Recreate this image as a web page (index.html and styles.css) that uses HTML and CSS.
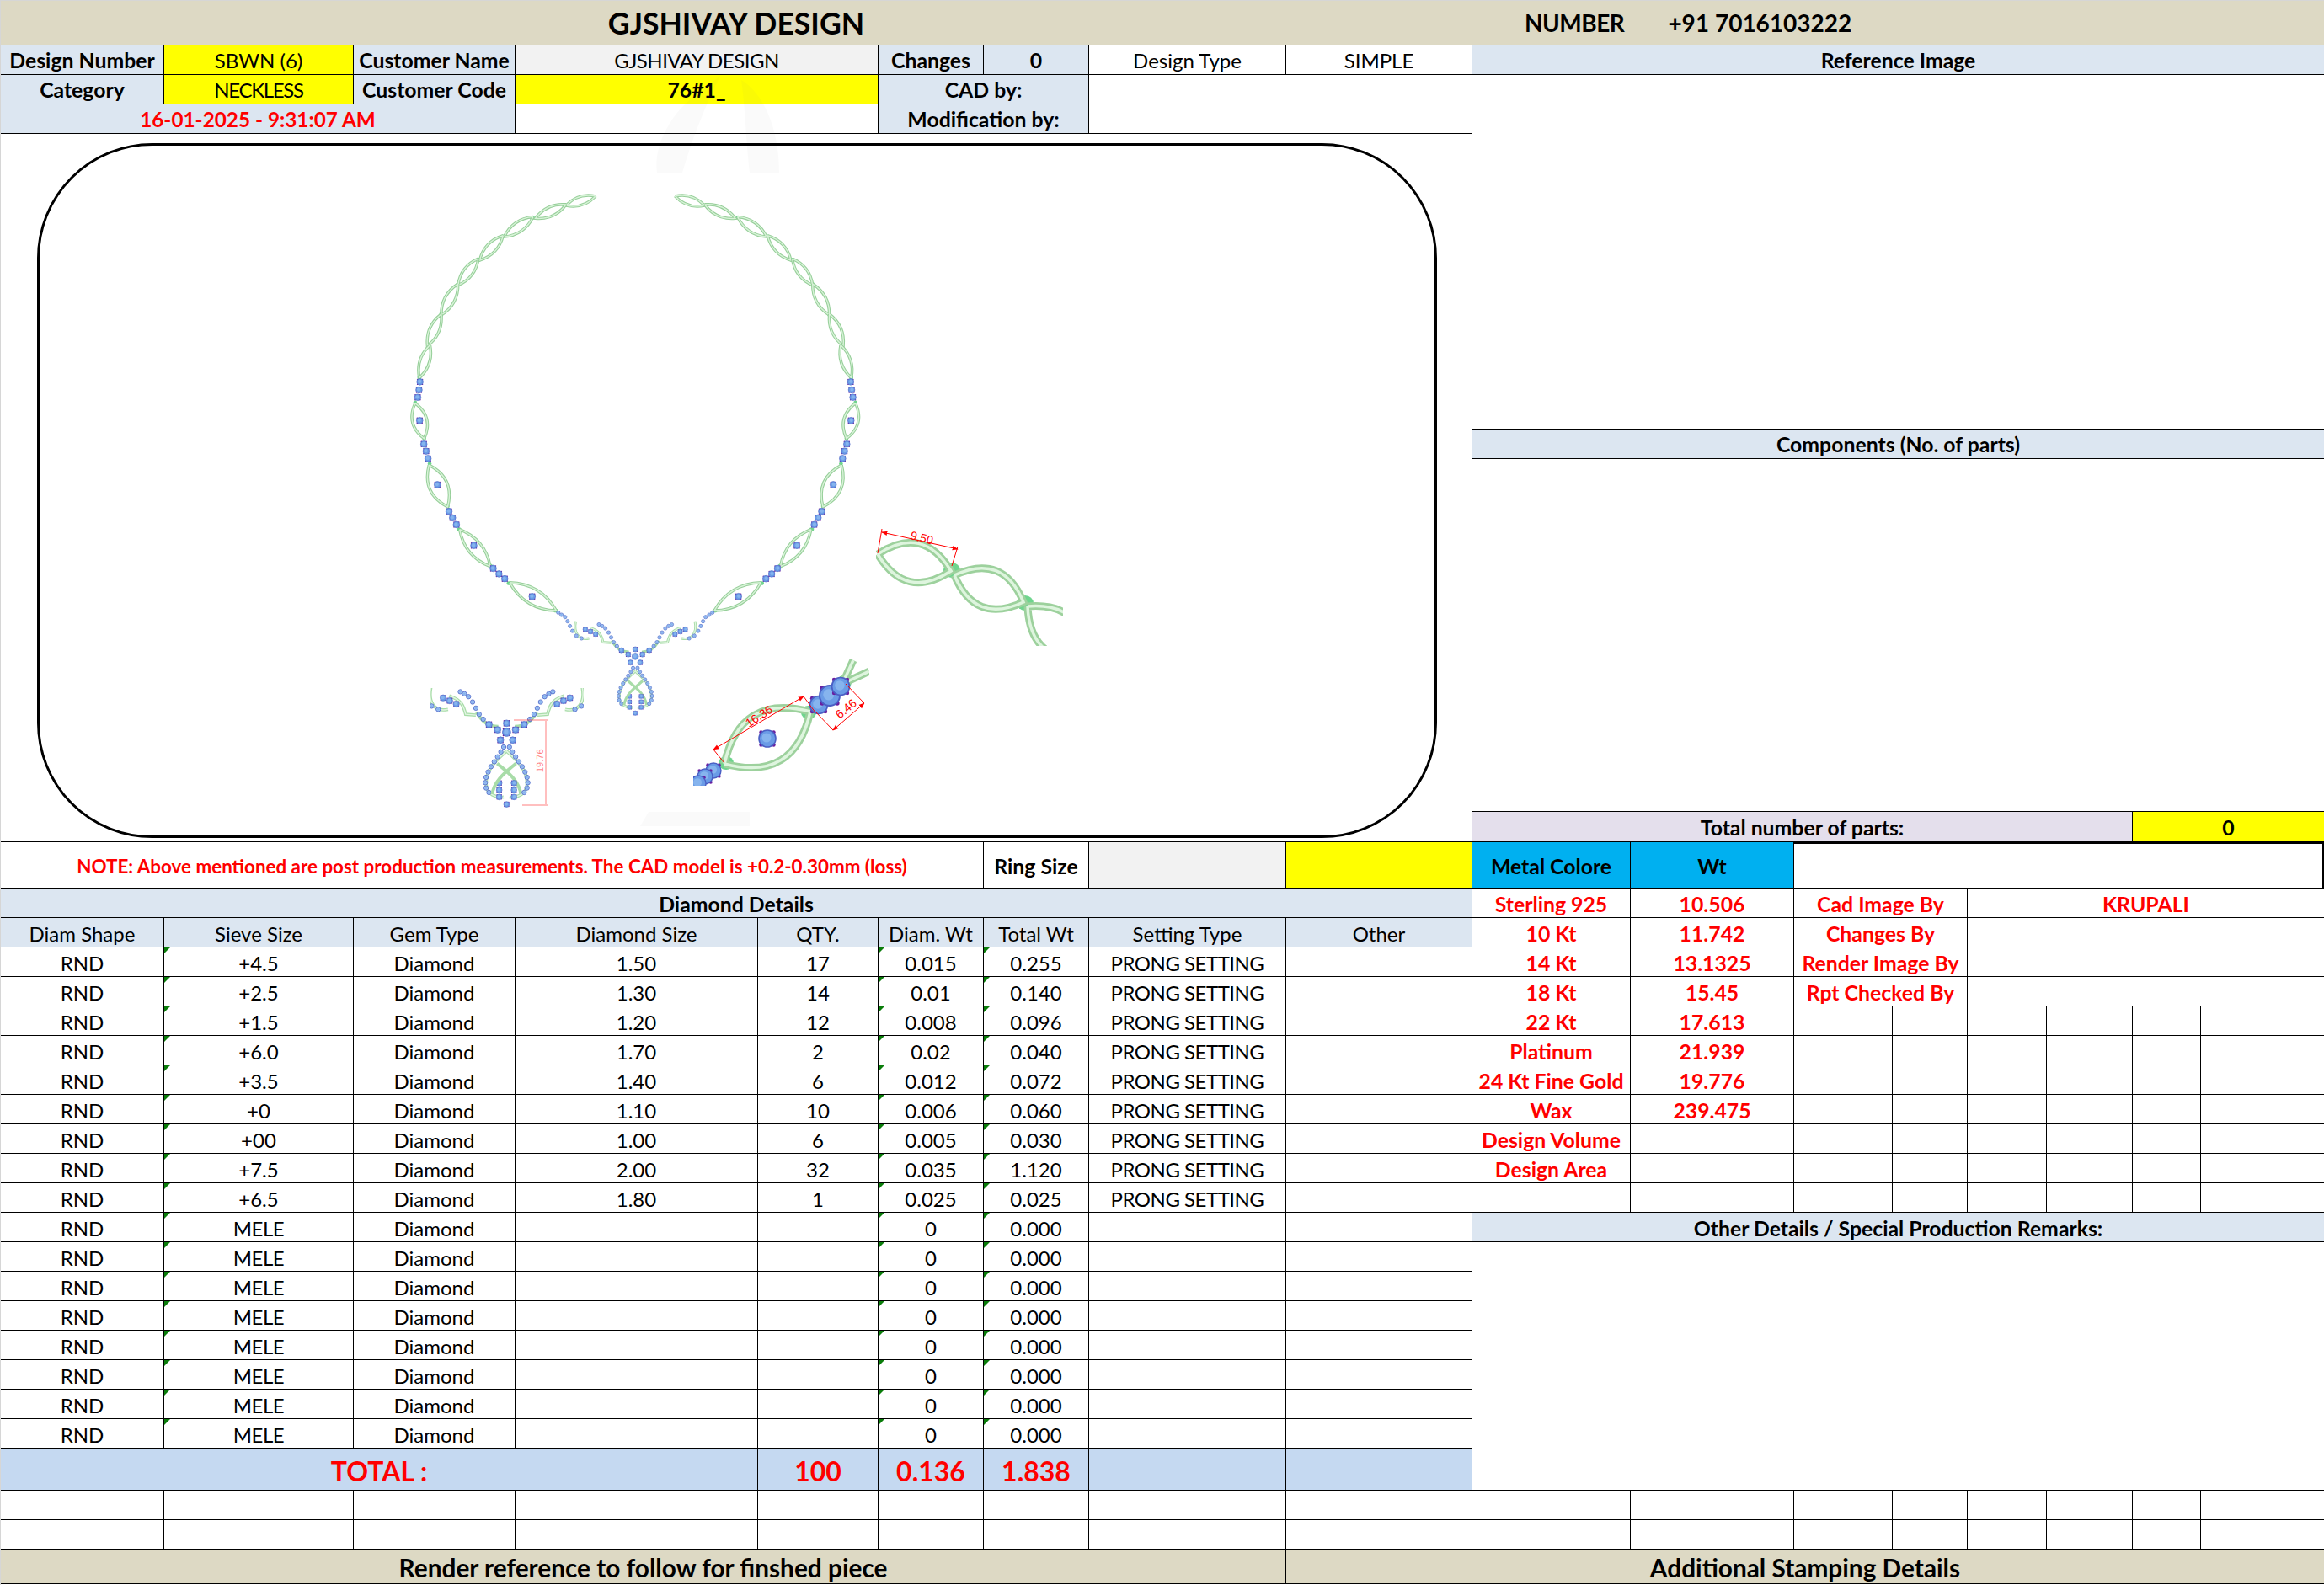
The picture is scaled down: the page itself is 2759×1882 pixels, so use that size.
FILE: index.html
```html
<!DOCTYPE html>
<html lang="en">
<head>
<meta charset="utf-8">
<title>GJSHIVAY DESIGN</title>
<link rel="stylesheet" href="styles.css">
</head>
<body>
<main class="sheet">
  <div class="upper">
    <section class="left">
      <div class="c tan title s9">GJSHIVAY DESIGN</div>

      <div class="c blue b">Design Number</div><div class="c yel">SBWN (6)</div><div class="c blue b">Customer Name</div><div class="c gray s2 caps">GJSHIVAY DESIGN</div><div class="c blue b">Changes</div><div class="c blue b">0</div><div class="c">Design Type</div><div class="c">SIMPLE</div>
      <div class="c blue b">Category</div><div class="c yel caps-tight">NECKLESS</div><div class="c blue b">Customer Code</div><div class="c yel b s2">76#1_</div><div class="c blue b s2">CAD by:</div><div class="c s2"></div>
      <div class="c blue red b s3 date">16-01-2025 - 9:31:07 AM</div><div class="c s2"></div><div class="c blue b s2">Modification by:</div><div class="c s2"></div>

      <div class="c s9 drawing">
        <svg class="art" viewBox="1 159 1747 841" aria-hidden="true">
          <defs>
            <g id="leaf"><path class="tube" d="M0 0Q.5 .28 1 0Q.5 -.28 0 0"/><path class="tube-hi" d="M0 0Q.5 .28 1 0Q.5 -.28 0 0"/></g>
            <g id="leaf-wide"><path class="tube" d="M0 0Q.5 .4 1 0Q.5 -.4 0 0"/><path class="tube-hi" d="M0 0Q.5 .4 1 0Q.5 -.4 0 0"/></g>
            <g id="fat-leaf"><path class="fat" d="M0 0Q.5 .52 1 0Q.5 -.52 0 0"/><path class="fat-hi" d="M0 0Q.5 .52 1 0Q.5 -.52 0 0"/></g>
            <g id="stone">
              <circle class="prong" cx="-7.500" cy="-7.500" r="2.200"/><circle class="prong" cx="7.500" cy="-7.500" r="2.200"/><circle class="prong" cx="-7.500" cy="7.500" r="2.200"/><circle class="prong" cx="7.500" cy="7.500" r="2.200"/>
              <circle class="gem" r="10"/><circle class="gem-hi" cx="-1" cy="-1" r="5.500"/>
            </g>
            <g id="bead"><circle class="gem thin" r="5.500"/><circle class="gem-hi" r="2.600"/></g>
            <marker id="arrow" viewBox="0 0 10 10" refX="9" refY="5" markerWidth="7" markerHeight="7" orient="auto-start-reverse"><path class="dim-head" d="M0 1L10 5L0 9Z"/></marker>
            <clipPath id="clip-chain"><rect x="1040" y="630" width="222" height="137"/></clipPath>
            <clipPath id="clip-link"><rect x="823" y="782" width="209" height="151"/></clipPath>
            <clipPath id="clip-drop"><rect x="510" y="817" width="183" height="142"/></clipPath>

            <g id="half">
              <ellipse class="blob" cx="572" cy="112" rx="8" ry="5"/><ellipse class="blob" cx="475" cy="152" rx="8" ry="5"/><ellipse class="blob" cx="386" cy="210" rx="8" ry="5"/><ellipse class="blob" cx="310" cy="283" rx="7" ry="6"/><ellipse class="blob" cx="245" cy="360" rx="6" ry="7"/><ellipse class="blob" cx="193" cy="453" rx="6" ry="8"/><ellipse class="blob" cx="153" cy="548" rx="6" ry="8"/><ellipse class="blob" cx="125" cy="648" rx="6" ry="8"/><ellipse class="blob" cx="112" cy="726" rx="6" ry="6"/><ellipse class="blob" cx="140" cy="838" rx="6" ry="6"/><ellipse class="blob" cx="157" cy="916" rx="6" ry="6"/><ellipse class="blob" cx="213" cy="1048" rx="6" ry="6"/><ellipse class="blob" cx="248" cy="1120" rx="7" ry="6"/><ellipse class="blob" cx="345" cy="1233" rx="7" ry="6"/><ellipse class="blob" cx="403" cy="1287" rx="7" ry="6"/><ellipse class="blob" cx="548" cy="1372" rx="7" ry="6"/>
              <use href="#leaf" transform="matrix(-92 29 -29 -92 672 86)"/>
              <use href="#leaf" transform="matrix(-95 43 -43 -95 580 112)"/>
              <use href="#leaf" transform="matrix(-90 62 -62 -90 478 150)"/>
              <use href="#leaf" transform="matrix(-73 77 -77 -73 385 208)"/>
              <use href="#leaf" transform="matrix(-63 82 -82 -63 308 280)"/>
              <use href="#leaf" transform="matrix(-52 97 -97 -52 245 358)"/>
              <use href="#leaf" transform="matrix(-43 98 -98 -43 193 452)"/>
              <use href="#leaf" transform="matrix(-33 102 -102 -33 158 548)"/>
              <use href="#leaf-wide" transform="matrix(28 110 -110 28 112 728)"/>
              <use href="#leaf-wide" transform="matrix(58 130 -130 58 155 920)"/>
              <use href="#leaf" transform="matrix(95 115 -115 95 250 1120)"/>
              <use href="#leaf" transform="matrix(145 87 -87 145 405 1285)"/>
              <use href="#stone" x="127" y="662"/><use href="#stone" x="124" y="687"/><use href="#stone" x="120" y="710"/>
              <use href="#stone" x="126" y="782"/>
              <use href="#stone" x="139" y="855"/><use href="#stone" x="146" y="877"/><use href="#stone" x="152" y="900"/>
              <use href="#stone" x="181" y="981"/>
              <use href="#stone" x="217" y="1064"/><use href="#stone" x="228" y="1084"/><use href="#stone" x="240" y="1105"/>
              <use href="#stone" x="294" y="1170"/>
              <use href="#stone" x="354" y="1241"/><use href="#stone" x="372" y="1258"/><use href="#stone" x="390" y="1273"/>
              <use href="#stone" x="475" y="1328"/>
            </g>

            <g id="center-half">
              <path class="ribbon" d="M610 1405C603 1440 618 1465 652 1458"/>
              <path class="ribbon" d="M655 1425C685 1435 690 1450 695 1470L720 1472"/>
              <path class="ribbon" d="M722 1465C735 1490 752 1500 775 1500"/>
              <path class="ribbon-hi" d="M610 1405C603 1440 618 1465 652 1458"/>
              <path class="ribbon-hi" d="M655 1425C685 1435 690 1450 695 1470L720 1472"/>
              <use href="#bead" x="556" y="1378"/><use href="#bead" x="566" y="1385"/><use href="#bead" x="577" y="1392"/><use href="#bead" x="585" y="1405"/><use href="#bead" x="592" y="1420"/><use href="#bead" x="600" y="1435"/><use href="#bead" x="612" y="1450"/><use href="#bead" x="628" y="1458"/>
              <use href="#stone" transform="translate(640 1430) scale(.75)"/><use href="#stone" transform="translate(656 1437) scale(.75)"/><use href="#stone" transform="translate(672 1445) scale(.75)"/>
              <use href="#bead" x="682" y="1415"/><use href="#bead" x="692" y="1420"/><use href="#bead" x="702" y="1427"/><use href="#bead" x="712" y="1440"/><use href="#bead" x="720" y="1455"/><use href="#bead" x="728" y="1470"/><use href="#bead" x="738" y="1482"/>
              <use href="#stone" transform="translate(752 1495) scale(.8)"/>
              <path class="ribbon" d="M795 1560C760 1590 745 1610 745 1640C745 1665 770 1675 788 1672"/>
              <path class="ribbon" d="M772 1590C795 1610 825 1630 830 1665"/>
              <path class="ribbon-hi" d="M795 1560C760 1590 745 1610 745 1640C745 1665 770 1675 788 1672"/>
              <use href="#bead" x="788" y="1550"/><use href="#bead" x="781" y="1562"/><use href="#bead" x="773" y="1574"/><use href="#bead" x="765" y="1586"/><use href="#bead" x="757" y="1598"/><use href="#bead" x="750" y="1611"/><use href="#bead" x="745" y="1624"/><use href="#bead" x="743" y="1637"/><use href="#bead" x="745" y="1650"/><use href="#bead" x="752" y="1661"/>
              <use href="#stone" transform="translate(777 1638) scale(.7)"/><use href="#stone" transform="translate(777 1655) scale(.7)"/><use href="#stone" transform="translate(777 1672) scale(.7)"/>
            </g>

            <g id="center">
              <use href="#center-half"/>
              <use href="#center-half" transform="translate(1590 0) scale(-1 1)"/>
              <use href="#stone" transform="translate(795 1690) scale(.7)"/>
              <use href="#stone" transform="translate(795 1492) scale(.8)"/>
              <use href="#stone" transform="translate(773 1508) scale(.8)"/>
              <use href="#stone" transform="translate(817 1508) scale(.8)"/>
              <use href="#stone" transform="translate(780 1533) scale(.8)"/>
              <use href="#stone" transform="translate(810 1533) scale(.8)"/>
              <use href="#stone" transform="translate(795 1514)"/>
            </g>
          </defs>

          <g class="ghost">
            <path d="M855 90C835 130 820 170 810 205L780 205C775 170 800 130 830 110Z"/>
            <path d="M880 95C905 110 925 150 925 205L890 205C885 160 885 130 880 95Z"/>
            <path d="M770 964H890V981H760Z"/>
          </g>

          <rect class="frame" x="45.500" y="171.500" width="1659" height="822" rx="135" ry="135"/>

          <g transform="translate(450 200) scale(.3827)">
            <use href="#half"/>
            <use href="#half" transform="translate(1590 0) scale(-1 1)"/>
            <use href="#center"/>
          </g>

          <g clip-path="url(#clip-drop)">
            <use href="#center" transform="translate(601.400 870) scale(.486) translate(-795 -1515)"/>
          </g>
          <path class="dim faint" d="M610 855H650M620 956H650"/>
          <path class="dim faint" d="M648 856V955"/>
          <text class="dim-text faint" transform="translate(645 917) rotate(-90)">19.76</text>

          <g clip-path="url(#clip-chain)">
            <ellipse class="blob" cx="1130" cy="677" rx="10" ry="9"/><ellipse class="blob" cx="1217" cy="716" rx="10" ry="9"/>
            <use href="#fat-leaf" transform="matrix(87 20 -20 87 1042 658)"/>
            <use href="#fat-leaf" transform="matrix(82 32 -32 82 1133 683)"/>
            <use href="#fat-leaf" transform="matrix(70 62 -62 70 1220 720)"/>
          </g>
          <path class="dim" d="M1047 628L1042 657M1137 649L1130 672"/>
          <path class="dim" d="M1047 632L1137 652" marker-start="url(#arrow)" marker-end="url(#arrow)"/>
          <text class="dim-text" transform="translate(1080 640) rotate(14)">9.50</text>

          <g clip-path="url(#clip-link)">
            <ellipse class="blob" cx="960" cy="846" rx="9" ry="8"/><ellipse class="blob" cx="862" cy="906" rx="9" ry="8"/><ellipse class="blob" cx="1002" cy="810" rx="9" ry="8"/>
            <path class="fat" d="M1000 812L1013 784M1000 812L1032 797"/>
            <path class="fat-hi" d="M1000 812L1013 784M1000 812L1032 797"/>
            <use href="#fat-leaf" transform="matrix(102 -62 62 102 860 907)"/>
            <use href="#stone" transform="translate(911 877) scale(1)"/>
            <use href="#stone" transform="translate(972 837) scale(1.05)"/>
            <use href="#stone" transform="translate(985 826) scale(1.2)"/>
            <use href="#stone" transform="translate(998 815) scale(1.05)"/>
            <use href="#stone" transform="translate(847 915) scale(.9)"/>
            <use href="#stone" transform="translate(837 922) scale(.9)"/>
            <use href="#stone" transform="translate(829 930) scale(.9)"/>
          </g>
          <path class="dim" d="M847 890L860 906M954 827L968 846"/>
          <path class="dim" d="M847 890L954 827" marker-start="url(#arrow)" marker-end="url(#arrow)"/>
          <text class="dim-text" transform="translate(889 864) rotate(-33)">16.36</text>
          <path class="dim" d="M989 867L968 845M1026 835L1004 812"/>
          <path class="dim" d="M989 867L1026 835" marker-start="url(#arrow)" marker-end="url(#arrow)"/>
          <text class="dim-text" transform="translate(997 854) rotate(-40)">6.46</text>
        </svg>
      </div>

      <div class="c red b s6 note">NOTE: Above mentioned are post production measurements. The CAD model is +0.2-0.30mm (loss)</div><div class="c b">Ring Size</div><div class="c gray"></div><div class="c yel"></div>

      <div class="c blue b s9">Diamond Details</div>
      <div class="c blue">Diam Shape</div><div class="c blue">Sieve Size</div><div class="c blue">Gem Type</div><div class="c blue">Diamond Size</div><div class="c blue">QTY.</div><div class="c blue">Diam. Wt</div><div class="c blue">Total Wt</div><div class="c blue">Setting Type</div><div class="c blue">Other</div>

      <div class="c">RND</div><div class="c flag">+4.5</div><div class="c">Diamond</div><div class="c">1.50</div><div class="c">17</div><div class="c flag">0.015</div><div class="c flag">0.255</div><div class="c caps">PRONG SETTING</div><div class="c"></div>
      <div class="c">RND</div><div class="c flag">+2.5</div><div class="c">Diamond</div><div class="c">1.30</div><div class="c">14</div><div class="c flag">0.01</div><div class="c flag">0.140</div><div class="c caps">PRONG SETTING</div><div class="c"></div>
      <div class="c">RND</div><div class="c flag">+1.5</div><div class="c">Diamond</div><div class="c">1.20</div><div class="c">12</div><div class="c flag">0.008</div><div class="c flag">0.096</div><div class="c caps">PRONG SETTING</div><div class="c"></div>
      <div class="c">RND</div><div class="c flag">+6.0</div><div class="c">Diamond</div><div class="c">1.70</div><div class="c">2</div><div class="c flag">0.02</div><div class="c flag">0.040</div><div class="c caps">PRONG SETTING</div><div class="c"></div>
      <div class="c">RND</div><div class="c flag">+3.5</div><div class="c">Diamond</div><div class="c">1.40</div><div class="c">6</div><div class="c flag">0.012</div><div class="c flag">0.072</div><div class="c caps">PRONG SETTING</div><div class="c"></div>
      <div class="c">RND</div><div class="c flag">+0</div><div class="c">Diamond</div><div class="c">1.10</div><div class="c">10</div><div class="c flag">0.006</div><div class="c flag">0.060</div><div class="c caps">PRONG SETTING</div><div class="c"></div>
      <div class="c">RND</div><div class="c flag">+00</div><div class="c">Diamond</div><div class="c">1.00</div><div class="c">6</div><div class="c flag">0.005</div><div class="c flag">0.030</div><div class="c caps">PRONG SETTING</div><div class="c"></div>
      <div class="c">RND</div><div class="c flag">+7.5</div><div class="c">Diamond</div><div class="c">2.00</div><div class="c">32</div><div class="c flag">0.035</div><div class="c flag">1.120</div><div class="c caps">PRONG SETTING</div><div class="c"></div>
      <div class="c">RND</div><div class="c flag">+6.5</div><div class="c">Diamond</div><div class="c">1.80</div><div class="c">1</div><div class="c flag">0.025</div><div class="c flag">0.025</div><div class="c caps">PRONG SETTING</div><div class="c"></div>
      <div class="c">RND</div><div class="c flag caps">MELE</div><div class="c">Diamond</div><div class="c"></div><div class="c"></div><div class="c flag">0</div><div class="c flag">0.000</div><div class="c"></div><div class="c"></div>
      <div class="c">RND</div><div class="c flag caps">MELE</div><div class="c">Diamond</div><div class="c"></div><div class="c"></div><div class="c flag">0</div><div class="c flag">0.000</div><div class="c"></div><div class="c"></div>
      <div class="c">RND</div><div class="c flag caps">MELE</div><div class="c">Diamond</div><div class="c"></div><div class="c"></div><div class="c flag">0</div><div class="c flag">0.000</div><div class="c"></div><div class="c"></div>
      <div class="c">RND</div><div class="c flag caps">MELE</div><div class="c">Diamond</div><div class="c"></div><div class="c"></div><div class="c flag">0</div><div class="c flag">0.000</div><div class="c"></div><div class="c"></div>
      <div class="c">RND</div><div class="c flag caps">MELE</div><div class="c">Diamond</div><div class="c"></div><div class="c"></div><div class="c flag">0</div><div class="c flag">0.000</div><div class="c"></div><div class="c"></div>
      <div class="c">RND</div><div class="c flag caps">MELE</div><div class="c">Diamond</div><div class="c"></div><div class="c"></div><div class="c flag">0</div><div class="c flag">0.000</div><div class="c"></div><div class="c"></div>
      <div class="c">RND</div><div class="c flag caps">MELE</div><div class="c">Diamond</div><div class="c"></div><div class="c"></div><div class="c flag">0</div><div class="c flag">0.000</div><div class="c"></div><div class="c"></div>
      <div class="c">RND</div><div class="c flag caps">MELE</div><div class="c">Diamond</div><div class="c"></div><div class="c"></div><div class="c flag">0</div><div class="c flag">0.000</div><div class="c"></div><div class="c"></div>

      <div class="c total s4">TOTAL :</div><div class="c total">100</div><div class="c total">0.136</div><div class="c total">1.838</div><div class="c total"></div><div class="c total"></div>
    </section>

    <section class="right">
      <div class="c tan contact s8 e"><span>NUMBER</span><span>+91 7016103222</span></div>
      <div class="c blue b s8 e tight">Reference Image</div>
      <div class="c s8 e"></div>
      <div class="c blue b s8 e tight">Components (No. of parts)</div>
      <div class="c s8 e"></div>
      <div class="c lav b s6 tight">Total number of parts:</div><div class="c yel b s2 e tight">0</div>
      <div class="c cyan">Metal Colore</div><div class="c cyan">Wt</div><div class="c box s6 e"></div>

      <div class="c red b">Sterling 925</div><div class="c red b">10.506</div><div class="c red b s2">Cad Image By</div><div class="c red b s4 e">KRUPALI</div>
      <div class="c red b">10 Kt</div><div class="c red b">11.742</div><div class="c red b s2">Changes By</div><div class="c s4 e"></div>
      <div class="c red b">14 Kt</div><div class="c red b">13.1325</div><div class="c red b s2">Render Image By</div><div class="c s4 e"></div>
      <div class="c red b">18 Kt</div><div class="c red b">15.45</div><div class="c red b s2">Rpt Checked By</div><div class="c s4 e"></div>
      <div class="c red b">22 Kt</div><div class="c red b">17.613</div><div class="c"></div><div class="c"></div><div class="c"></div><div class="c"></div><div class="c"></div><div class="c e"></div>
      <div class="c red b">Platinum</div><div class="c red b">21.939</div><div class="c"></div><div class="c"></div><div class="c"></div><div class="c"></div><div class="c"></div><div class="c e"></div>
      <div class="c red b">24 Kt Fine Gold</div><div class="c red b">19.776</div><div class="c"></div><div class="c"></div><div class="c"></div><div class="c"></div><div class="c"></div><div class="c e"></div>
      <div class="c red b">Wax</div><div class="c red b">239.475</div><div class="c"></div><div class="c"></div><div class="c"></div><div class="c"></div><div class="c"></div><div class="c e"></div>
      <div class="c red b">Design Volume</div><div class="c"></div><div class="c"></div><div class="c"></div><div class="c"></div><div class="c"></div><div class="c"></div><div class="c e"></div>
      <div class="c red b">Design Area</div><div class="c"></div><div class="c"></div><div class="c"></div><div class="c"></div><div class="c"></div><div class="c"></div><div class="c e"></div>
      <div class="c"></div><div class="c"></div><div class="c"></div><div class="c"></div><div class="c"></div><div class="c"></div><div class="c"></div><div class="c e"></div>

      <div class="c blue b s8 e">Other Details / Special Production Remarks:</div>
      <div class="c s8 e"></div>
    </section>
  </div>

  <section class="lower">
    <div class="c"></div><div class="c"></div><div class="c"></div><div class="c"></div><div class="c"></div><div class="c"></div><div class="c"></div><div class="c"></div><div class="c"></div><div class="c"></div><div class="c"></div><div class="c"></div><div class="c"></div><div class="c"></div><div class="c"></div><div class="c"></div><div class="c e"></div>
    <div class="c"></div><div class="c"></div><div class="c"></div><div class="c"></div><div class="c"></div><div class="c"></div><div class="c"></div><div class="c"></div><div class="c"></div><div class="c"></div><div class="c"></div><div class="c"></div><div class="c"></div><div class="c"></div><div class="c"></div><div class="c"></div><div class="c e"></div>
    <div class="c tan foot s8">Render reference to follow for finshed piece</div><div class="c tan foot s9 e">Additional Stamping Details</div>
  </section>
</main>
</body>
</html>
```

FILE: styles.css
```css
html, body {
  margin: 0;
  padding: 0;
  background: #fff;
}

.sheet {
  box-sizing: border-box;
  width: 2759px;
  height: 1882px;
  overflow: hidden;
  border-top: 1px solid #d6d6d6;
  border-left: 1px solid #d6d6d6;
  display: flex;
  flex-direction: column;
  font-family: Lato, "Open Sans", sans-serif;
  font-size: 24px;
  color: #000;
}

.upper {
  display: flex;
}

.left {
  flex: none;
  width: 1747px;
  display: grid;
  grid-template-columns: 194px 225px 192px 288px 143px 125px 125px 234px 221px;
  grid-template-rows: 53px 35px 35px 35px 841px 55px 35px 35px repeat(17, 35px) 50px;
}

.right {
  flex: none;
  width: 1011px;
  display: grid;
  grid-template-columns: 188px 194px 117px 89px 94px 102px 81px 146px;
  grid-template-rows: 53px 35px 421px 35px 419px 36px 55px repeat(11, 35px) 35px 295px;
}

.lower {
  display: grid;
  grid-template-columns: 194px 225px 192px 288px 143px 125px 125px 234px 221px 188px 194px 117px 89px 94px 102px 81px 146px;
  grid-template-rows: 35px 35px 41px;
}

.c {
  box-sizing: border-box;
  display: flex;
  align-items: center;
  justify-content: center;
  padding-top: 3px;
  border-right: 1px solid #000;
  border-bottom: 1px solid #000;
  white-space: nowrap;
  position: relative;
  min-width: 0;
}

.left > .c:nth-child(-n+19),
.tight { padding-top: 1px; }

.e { border-right: 0; }

.s2 { grid-column: span 2; }
.s3 { grid-column: span 3; }
.s4 { grid-column: span 4; }
.s6 { grid-column: span 6; }
.s8 { grid-column: span 8; }
.s9 { grid-column: span 9; }

.b { font-weight: 700; font-size: 24.800px; }
.date { font-size: 24.300px; }
.red { color: #ff0000; }
.caps { letter-spacing: -.5px; }
.caps-tight { letter-spacing: -1.300px; }

.tan { background: #ddd9c4; }
.blue { background: #dce6f1; }
.yel { background: #ffff00; }
.gray { background: #f2f2f2; }
.lav { background: #e4dfec; }
.cyan { background: #00b0f0; font-weight: 700; font-size: 24.800px; }

.left > .title {
  font-size: 35.600px;
  font-weight: 700;
  padding-top: 0;
}

.contact {
  justify-content: flex-start;
  gap: 52px;
  padding-left: 62px;
  padding-top: 0;
  font-size: 28px;
  font-weight: 700;
}

.contact span:first-child {
  letter-spacing: -.5px;
}

.note { font-size: 22.400px; }

.total {
  background: #c5d9f1;
  color: #ff0000;
  font-size: 32px;
  font-weight: 700;
}

.foot {
  font-size: 29.800px;
  font-weight: 700;
  padding-top: 2px;
}

.box {
  border-top: 2px solid #000;
  border-right: 2px solid #000;
}

.flag::before {
  content: "";
  position: absolute;
  left: 0;
  top: 0;
  border-top: 7px solid #0a7d0a;
  border-right: 7px solid transparent;
}

.drawing { padding: 0; }

.art {
  position: absolute;
  left: 0;
  top: 0;
  width: 1747px;
  height: 841px;
  overflow: visible;
  pointer-events: none;
}

.frame {
  fill: none;
  stroke: #000;
  stroke-width: 3;
}

.ghost path {
  fill: #8a8a8a;
  opacity: .04;
}

.tube, .tube-hi, .fat, .fat-hi {
  fill: none;
  vector-effect: non-scaling-stroke;
}

.tube { stroke: #97cf9a; stroke-width: 3.500; }
.tube-hi { stroke: #d8f3d8; stroke-width: 1.400; }
.fat { stroke: #9dd19d; stroke-width: 9; }
.fat-hi { stroke: #def5de; stroke-width: 3.500; }

.blob { fill: #6fd58e; }

.gem { fill: #6a9be6; stroke: #4a5fc4; stroke-width: 1.600; }
.gem.thin { fill: #9cc0f2; stroke: #4a62c6; stroke-width: 1.600; }
.gem-hi { fill: #86b4ee; }
.prong { fill: #6a1fa0; }

.ribbon {
  fill: none;
  stroke: #a8dca8;
  stroke-width: 8;
}

.ribbon-hi {
  fill: none;
  stroke: #e2f6e2;
  stroke-width: 3;
}

.dim {
  fill: none;
  stroke: #f00;
  stroke-width: 1;
}

.dim-head { fill: #f00; }

.dim-text {
  fill: #f00;
  font-family: "Liberation Sans", sans-serif;
  font-size: 14px;
}

.faint { opacity: .5; }
text.faint { font-size: 11px; }
```
